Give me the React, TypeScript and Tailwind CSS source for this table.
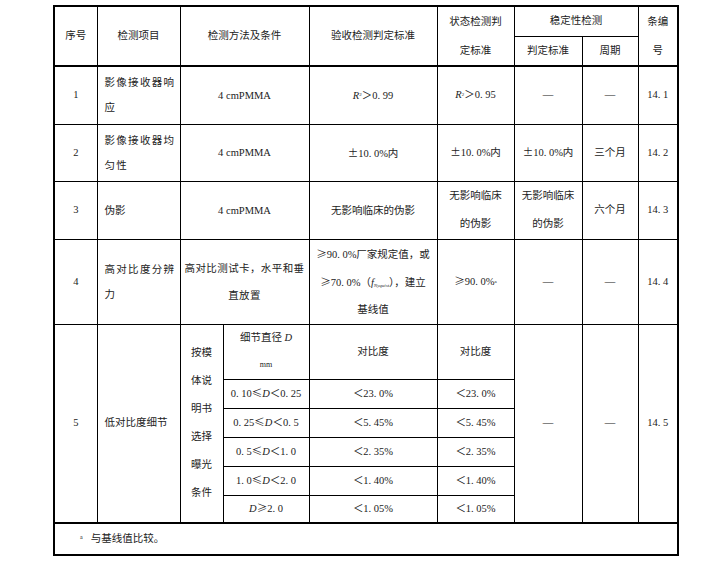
import React from "react";

const font = {
  fontFamily: '"Liberation Serif", "Noto Sans CJK SC", serif',
};

const td = "border border-black align-middle text-center p-0";

// 全角符号走 CJK 字体
function S({ c }: { c: string }) {
  return <span className="font-['Noto_Sans_CJK_SC']">{c}</span>;
}

const rows = [
  {
    no: "1",
    item: (
      <>
        影像接收器响
        <br />应
      </>
    ),
    method: "4 cmPMMA",
    accept: (
      <>
        <i>R</i>
        <sup className="text-[5px]">2</sup>＞0. 99
      </>
    ),
    state: (
      <>
        <i>R</i>
        <sup className="text-[5px]">2</sup>＞0. 95
      </>
    ),
    crit: "—",
    period: "—",
    clause: "14. 1",
    h: "h-[58px]",
  },
  {
    no: "2",
    item: (
      <>
        影像接收器均
        <br />
        匀性
      </>
    ),
    method: "4 cmPMMA",
    accept: (
      <>
        <S c="±" />
        10. 0%内
      </>
    ),
    state: (
      <>
        <S c="±" />
        10. 0%内
      </>
    ),
    crit: (
      <>
        <S c="±" />
        10. 0%内
      </>
    ),
    period: "三个月",
    clause: "14. 2",
    h: "h-[57px]",
  },
  {
    no: "3",
    item: "伪影",
    method: "4 cmPMMA",
    accept: "无影响临床的伪影",
    state: (
      <>
        无影响临床
        <br />
        的伪影
      </>
    ),
    crit: (
      <>
        无影响临床
        <br />
        的伪影
      </>
    ),
    period: "六个月",
    clause: "14. 3",
    h: "h-[58px]",
  },
  {
    no: "4",
    item: (
      <>
        高对比度分辨
        <br />力
      </>
    ),
    method: (
      <>
        高对比测试卡，水平和垂
        <br />
        直放置
      </>
    ),
    accept: (
      <>
        <S c="≥" />
        90. 0%厂家规定值，或
        <br />
        <S c="≥" />
        70. 0%（<i>f</i>
        <sub className="text-[5px] italic">Nyquist</sub>），建立
        <br />
        基线值
      </>
    ),
    state: (
      <>
        <S c="≥" />
        90. 0%<sup className="text-[5px]">a</sup>
      </>
    ),
    crit: "—",
    period: "—",
    clause: "14. 4",
    h: "h-[85px]",
  },
];

const details = [
  {
    d: (
      <>
        0. 10<S c="≤" />
        <i>D</i>＜0. 25
      </>
    ),
    v: "＜23. 0%",
  },
  {
    d: (
      <>
        0. 25<S c="≤" />
        <i>D</i>＜0. 5
      </>
    ),
    v: "＜5. 45%",
  },
  {
    d: (
      <>
        0. 5<S c="≤" />
        <i>D</i>＜1. 0
      </>
    ),
    v: "＜2. 35%",
  },
  {
    d: (
      <>
        1. 0<S c="≤" />
        <i>D</i>＜2. 0
      </>
    ),
    v: "＜1. 40%",
  },
  {
    d: (
      <>
        <i>D</i>
        <S c="≥" />
        2. 0
      </>
    ),
    v: "＜1. 05%",
  },
];

export default function App() {
  return (
    <main className="min-h-screen bg-white pl-[53px] pt-[5px] text-[#222]" style={font}>
      <table className="table-fixed border-collapse border-2 border-black w-[624px] text-[10.5px]">
        <colgroup>
          <col className="w-[43px]" />
          <col className="w-[83px]" />
          <col className="w-[43px]" />
          <col className="w-[86px]" />
          <col className="w-[128px]" />
          <col className="w-[77px]" />
          <col className="w-[68px]" />
          <col className="w-[56px]" />
          <col className="w-[40px]" />
        </colgroup>
        <tbody>
          {/* ===== 表头 ===== */}
          <tr className="h-[29px]">
            <td rowSpan={2} className={td}>
              序号
            </td>
            <td rowSpan={2} className={td}>
              检测项目
            </td>
            <td rowSpan={2} colSpan={2} className={td}>
              检测方法及条件
            </td>
            <td rowSpan={2} className={td}>
              验收检测判定标准
            </td>
            <td rowSpan={2} className={`${td} leading-[29px]`}>
              状态检测判
              <br />
              定标准
            </td>
            <td colSpan={2} className={td}>
              稳定性检测
            </td>
            <td rowSpan={2} className={`${td} leading-[29px]`}>
              条编
              <br />号
            </td>
          </tr>
          <tr className="h-[29px]">
            <td className={td}>判定标准</td>
            <td className={td}>周期</td>
          </tr>

          {rows.map((r, i) => (
            <tr key={r.no} className={r.h}>
              <td className={`${td} ${i === 0 ? "border-t-2" : ""}`}>{r.no}</td>
              <td
                className={`${td} text-left pl-[7px] leading-[25px] ${
                  r.no === "3" ? "" : "tracking-[1.3px]"
                } ${i === 0 ? "border-t-2" : ""}`}
              >
                {r.item}
              </td>
              <td
                colSpan={2}
                className={`${td} leading-[27px] ${r.no === "4" ? "tracking-[0.4px]" : ""} ${
                  i === 0 ? "border-t-2" : ""
                }`}
              >
                {r.method}
              </td>
              <td className={`${td} leading-[27px] ${i === 0 ? "border-t-2" : ""}`}>{r.accept}</td>
              <td className={`${td} leading-[28px] ${i === 0 ? "border-t-2" : ""}`}>{r.state}</td>
              <td className={`${td} leading-[28px] ${i === 0 ? "border-t-2" : ""}`}>{r.crit}</td>
              <td className={`${td} ${i === 0 ? "border-t-2" : ""}`}>{r.period}</td>
              <td className={`${td} ${i === 0 ? "border-t-2" : ""}`}>{r.clause}</td>
            </tr>
          ))}

          {/* ===== 低对比度细节 ===== */}
          <tr className="h-[55px]">
            <td rowSpan={6} className={td}>
              5
            </td>
            <td rowSpan={6} className={`${td} text-left pl-[7px]`}>
              低对比度细节
            </td>
            <td rowSpan={6} className={`${td} leading-[28px]`}>
              按模
              <br />
              体说
              <br />
              明书
              <br />
              选择
              <br />
              曝光
              <br />
              条件
            </td>
            <td className={`${td} leading-[26px]`}>
              细节直径 <i>D</i>
              <br />
              <span className="text-[8px]">mm</span>
            </td>
            <td className={td}>对比度</td>
            <td className={td}>对比度</td>
            <td rowSpan={6} className={td}>
              —
            </td>
            <td rowSpan={6} className={td}>
              —
            </td>
            <td rowSpan={6} className={td}>
              14. 5
            </td>
          </tr>
          {details.map((d, i) => (
            <tr key={i} className={i === 4 ? "h-[28px]" : "h-[29px]"}>
              <td className={td}>{d.d}</td>
              <td className={td}>{d.v}</td>
              <td className={td}>{d.v}</td>
            </tr>
          ))}

          <tr className="h-[32px]">
            <td colSpan={9} className={`${td} border-t-2 text-left pl-[25px]`}>
              <sup className="text-[6px] mr-[8px]">a</sup>与基线值比较。
            </td>
          </tr>
        </tbody>
      </table>
    </main>
  );
}
